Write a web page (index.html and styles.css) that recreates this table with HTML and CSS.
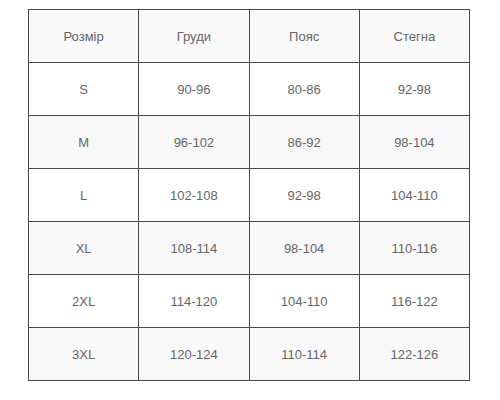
FILE: index.html
```html
<!DOCTYPE html>
<html lang="uk">
<head>
<meta charset="utf-8">
<link rel="stylesheet" href="styles.css">
</head>
<body>
<div class="wrap">
<table class="sizes">
<thead>
<tr><th>Розмір</th><th>Груди</th><th>Пояс</th><th>Стегна</th></tr>
</thead>
<tbody>
<tr><td>S</td><td>90-96</td><td>80-86</td><td>92-98</td></tr>
<tr><td>M</td><td>96-102</td><td>86-92</td><td>98-104</td></tr>
<tr><td>L</td><td>102-108</td><td>92-98</td><td>104-110</td></tr>
<tr><td>XL</td><td>108-114</td><td>98-104</td><td>110-116</td></tr>
<tr><td>2XL</td><td>114-120</td><td>104-110</td><td>116-122</td></tr>
<tr><td>3XL</td><td>120-124</td><td>110-114</td><td>122-126</td></tr>
</tbody>
</table>
</div>
</body>
</html>
```
FILE: styles.css
```css
html, body {
  margin: 0;
  padding: 0;
  background: #ffffff;
}
.wrap {
  padding: 9px 0 0 28px;
}
.sizes {
  border-collapse: collapse;
  width: 442px;
  table-layout: fixed;
  font-family: "Liberation Sans", Arial, sans-serif;
  font-size: 13px;
  color: #666666;
}
.sizes th,
.sizes td {
  border: 1px solid #4a4a4a;
  height: 52px;
  padding: 0;
  text-align: center;
  vertical-align: middle;
  font-weight: normal;
}
.sizes thead tr,
.sizes tbody tr:nth-child(even) {
  background: #f9f9f9;
}
.sizes tbody tr:nth-child(odd) {
  background: #ffffff;
}
```
